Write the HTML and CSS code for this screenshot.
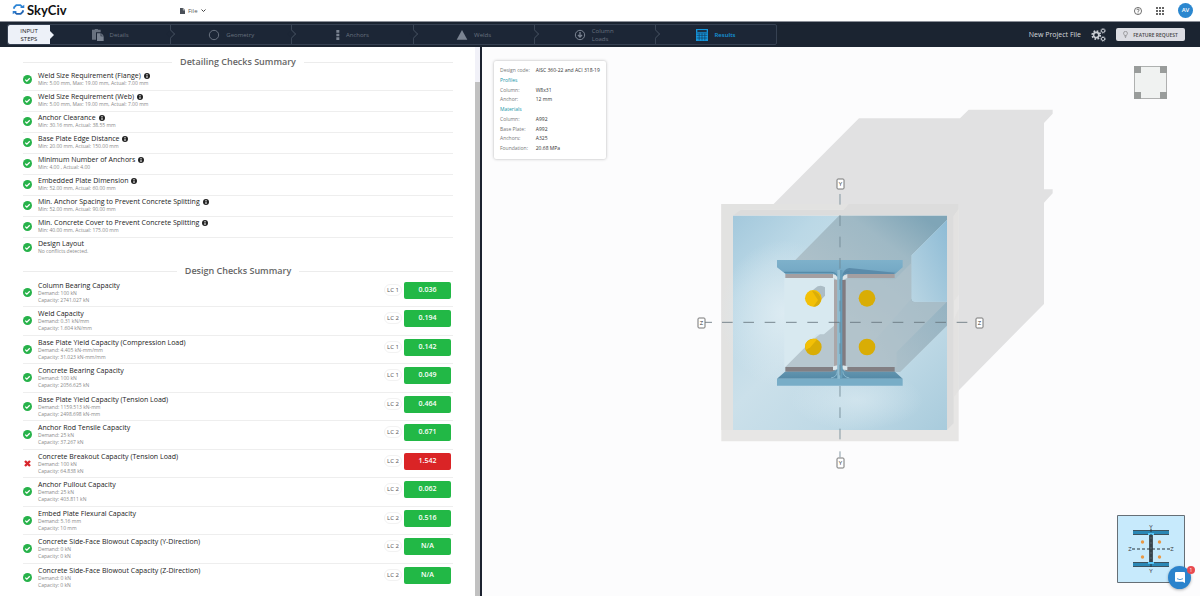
FILE: index.html
```
<!DOCTYPE html>
<html lang="en">
<head>
<meta charset="utf-8">
<title>SkyCiv Base Plate Design</title>
<link rel="stylesheet" href="styles.css">
</head>
<body>
<svg class="sprite" aria-hidden="true">
  <symbol id="ok" viewBox="0 0 18 18"><circle cx="9" cy="9" r="9" fill="#27b24a"/><path d="M4.500 9.200l3.200 3.200 5.800-5.800" fill="none" stroke="#fff" stroke-width="2.600"/></symbol>
  <symbol id="bad" viewBox="0 0 18 18"><path d="M4 4l10 10M14 4L4 14" fill="none" stroke="#d8262c" stroke-width="4.800"/></symbol>
  <symbol id="info" viewBox="0 0 12 12"><circle cx="6" cy="6" r="6" fill="#222"/><path d="M5 2h2v2H5zM5 5h2v5H5z" fill="#fff"/></symbol>
</svg>

<header class="topbar">
  <a class="brand" href="#">
    <svg class="brand-mark" viewBox="0 0 36 36" aria-hidden="true"><g fill="none" stroke-width="5"><path d="M5 16l1-4 6-6h11l6 5" stroke="#2f86d6"/><path d="M31 20l-1 4-6 6H13l-6-5" stroke="#2466b4"/></g><path d="M22 14h12V5zM14 22H2v9z" fill="#2f7fd0"/></svg>
    <span>SkyCiv</span>
  </a>
  <button class="file-menu" type="button">
    <svg class="i-doc" viewBox="0 0 12 14" aria-hidden="true"><path d="M0 0h7v5h5v9H0zM8 0l4 4H8z" fill="#4a5058"/></svg>
    File
    <svg class="i-caret" viewBox="0 0 10 6" aria-hidden="true"><path d="M1 1l4 4 4-4" fill="none" stroke="#444" stroke-width="2"/></svg>
  </button>
  <div class="top-actions">
    <button type="button" aria-label="Help"><svg class="i-top" viewBox="0 0 18 18"><circle cx="9" cy="9" r="8" fill="none" stroke="#444" stroke-width="1.700"/><path d="M6.500 7c0-3.400 5-3.400 5 0 0 1.800-2.500 1.800-2.500 4M9 12.500v2" fill="none" stroke="#444" stroke-width="1.700"/></svg></button>
    <button type="button" aria-label="Apps"><svg class="i-top" viewBox="0 0 16 16" fill="#666"><path d="M0 0h4v4H0zM6 0h4v4H6zM12 0h4v4h-4zM0 6h4v4H0zM6 6h4v4H6zM12 6h4v4h-4zM0 12h4v4H0zM6 12h4v4H6zM12 12h4v4h-4z"/></svg></button>
    <button class="avatar" type="button">AV</button>
  </div>
</header>

<nav class="stepbar" aria-label="Input steps">
  <div class="steps">
    <span class="steps-title">INPUT<br>STEPS</span>
    <a class="step" href="#"><svg class="i-step" viewBox="0 0 36 36"><path d="M0 2h8a5 3 0 0 1 10 0h8v8H12v22H0z" fill="#68717f"/><path d="M15 13h11v9h9v14H15zM28 13l7 7h-7z" fill="#7b8492"/></svg>Details<i></i></a>
    <a class="step" href="#"><svg class="i-step" viewBox="0 0 36 36"><circle cx="18" cy="18" r="14" fill="none" stroke="#68717f" stroke-width="3"/></svg>Geometry<i></i></a>
    <a class="step" href="#"><svg class="i-dots" viewBox="0 0 12 36" fill="#7b8492"><path d="M1 3h9v8H1zM1 14h9v8H1zM1 25h9v8H1z"/></svg>Anchors<i></i></a>
    <a class="step" href="#"><svg class="i-step" viewBox="0 0 36 36"><path d="M18 3l16 29H2z" fill="#7b8492"/></svg>Welds<i></i></a>
    <a class="step narrow" href="#"><svg class="i-step" viewBox="0 0 36 36" fill="none" stroke="#7b8492"><circle cx="18" cy="18" r="14" stroke-width="3"/><path d="M18 9v16M12 18l6 6 6-6" stroke-width="4"/></svg><span>Column Loads</span><i></i></a>
    <a class="step current" href="#" aria-current="step"><svg class="i-step" viewBox="0 0 36 36"><path d="M0 0h36v36H0z" fill="#1596dc"/><path d="M4 3h28v6H4z" fill="#1c3248"/><path d="M9.500 13v21M18 13v21M26.500 13v21M2 12h32M2 19h32M2 27h32" stroke="#123a5c" stroke-width="2"/></svg>Results</a>
  </div>
  <div class="project">
    <span>New Project File</span>
    <button class="gears" type="button" aria-label="Settings"><svg viewBox="0 0 46 42" fill="none" stroke="#c9cdd4"><circle cx="16" cy="21" r="8" stroke-width="5"/><circle cx="16" cy="21" r="12" stroke-width="6" stroke-dasharray="5 4.420"/><circle cx="37" cy="8" r="5" stroke-width="3"/><circle cx="37" cy="8" r="7.500" stroke-width="2" stroke-dasharray="3 3"/><circle cx="37" cy="33" r="5" stroke-width="3"/><circle cx="37" cy="33" r="7.500" stroke-width="2" stroke-dasharray="3 3"/></svg></button>
    <button class="feature" type="button"><svg viewBox="0 0 14 20" fill="none" stroke="#666"><path d="M4.500 13C4 10 1.500 10 1.500 6.500a5.500 5.500 0 0 1 11 0C12.500 10 10 10 9.500 13zM4.500 16h5M5.500 19h3" stroke-width="1.500"/></svg>FEATURE REQUEST</button>
  </div>
</nav>

<main class="workspace">
  <section class="results">
    <h2>Detailing Checks Summary</h2>
    <ul class="detailing">
      <li><svg class="state"><use href="#ok"/></svg><div><h3>Weld Size Requirement (Flange)<svg><use href="#info"/></svg></h3><p>Min: 5.00 mm, Max: 19.00 mm, Actual: 7.00 mm</p></div></li>
      <li><svg class="state"><use href="#ok"/></svg><div><h3>Weld Size Requirement (Web)<svg><use href="#info"/></svg></h3><p>Min: 5.00 mm, Max: 19.00 mm, Actual: 7.00 mm</p></div></li>
      <li><svg class="state"><use href="#ok"/></svg><div><h3>Anchor Clearance<svg><use href="#info"/></svg></h3><p>Min: 30.16 mm, Actual: 38.55 mm</p></div></li>
      <li><svg class="state"><use href="#ok"/></svg><div><h3>Base Plate Edge Distance<svg><use href="#info"/></svg></h3><p>Min: 20.00 mm, Actual: 150.00 mm</p></div></li>
      <li><svg class="state"><use href="#ok"/></svg><div><h3>Minimum Number of Anchors<svg><use href="#info"/></svg></h3><p>Min: 4.00 , Actual: 4.00</p></div></li>
      <li><svg class="state"><use href="#ok"/></svg><div><h3>Embedded Plate Dimension<svg><use href="#info"/></svg></h3><p>Min: 52.00 mm, Actual: 60.00 mm</p></div></li>
      <li><svg class="state"><use href="#ok"/></svg><div><h3>Min. Anchor Spacing to Prevent Concrete Splitting<svg><use href="#info"/></svg></h3><p>Min: 52.00 mm, Actual: 90.00 mm</p></div></li>
      <li><svg class="state"><use href="#ok"/></svg><div><h3>Min. Concrete Cover to Prevent Concrete Splitting<svg><use href="#info"/></svg></h3><p>Min: 40.00 mm, Actual: 175.00 mm</p></div></li>
      <li><svg class="state"><use href="#ok"/></svg><div><h3>Design Layout</h3><p>No conflicts detected.</p></div></li>
    </ul>
    <h2>Design Checks Summary</h2>
    <ul class="design">
      <li><svg class="state"><use href="#ok"/></svg><div><h3>Column Bearing Capacity</h3><p>Demand: 100 kN</p><p>Capacity: 2741.027 kN</p></div><span class="lc">LC 1</span><b class="ratio">0.036</b></li>
      <li><svg class="state"><use href="#ok"/></svg><div><h3>Weld Capacity</h3><p>Demand: 0.31 kN/mm</p><p>Capacity: 1.604 kN/mm</p></div><span class="lc">LC 2</span><b class="ratio">0.194</b></li>
      <li><svg class="state"><use href="#ok"/></svg><div><h3>Base Plate Yield Capacity (Compression Load)</h3><p>Demand: 4.405 kN-mm/mm</p><p>Capacity: 31.023 kN-mm/mm</p></div><span class="lc">LC 1</span><b class="ratio">0.142</b></li>
      <li><svg class="state"><use href="#ok"/></svg><div><h3>Concrete Bearing Capacity</h3><p>Demand: 100 kN</p><p>Capacity: 2056.625 kN</p></div><span class="lc">LC 1</span><b class="ratio">0.049</b></li>
      <li><svg class="state"><use href="#ok"/></svg><div><h3>Base Plate Yield Capacity (Tension Load)</h3><p>Demand: 1159.513 kN-mm</p><p>Capacity: 2498.698 kN-mm</p></div><span class="lc">LC 2</span><b class="ratio">0.464</b></li>
      <li><svg class="state"><use href="#ok"/></svg><div><h3>Anchor Rod Tensile Capacity</h3><p>Demand: 25 kN</p><p>Capacity: 37.267 kN</p></div><span class="lc">LC 2</span><b class="ratio">0.671</b></li>
      <li><svg class="state"><use href="#bad"/></svg><div><h3>Concrete Breakout Capacity (Tension Load)</h3><p>Demand: 100 kN</p><p>Capacity: 64.838 kN</p></div><span class="lc">LC 2</span><b class="ratio fail">1.542</b></li>
      <li><svg class="state"><use href="#ok"/></svg><div><h3>Anchor Pullout Capacity</h3><p>Demand: 25 kN</p><p>Capacity: 403.811 kN</p></div><span class="lc">LC 2</span><b class="ratio">0.062</b></li>
      <li><svg class="state"><use href="#ok"/></svg><div><h3>Embed Plate Flexural Capacity</h3><p>Demand: 5.16 mm</p><p>Capacity: 10 mm</p></div><span class="lc">LC 2</span><b class="ratio">0.516</b></li>
      <li><svg class="state"><use href="#ok"/></svg><div><h3>Concrete Side-Face Blowout Capacity (Y-Direction)</h3><p>Demand: 0 kN</p><p>Capacity: 0 kN</p></div><span class="lc">LC 2</span><b class="ratio">N/A</b></li>
      <li><svg class="state"><use href="#ok"/></svg><div><h3>Concrete Side-Face Blowout Capacity (Z-Direction)</h3><p>Demand: 0 kN</p><p>Capacity: 0 kN</p></div><span class="lc">LC 2</span><b class="ratio">N/A</b></li>
    </ul>
  </section>
  <div class="scroll"><div class="thumb"></div></div>

  <section class="viewer">
    <svg class="scene" viewBox="482 47 718 549" role="img" aria-label="Plan view of column, base plate and anchors">
      <defs>
        <linearGradient id="plate" x1="0" y1="0" x2="1" y2="1"><stop offset="0" stop-color="#a3c8dc"/><stop offset=".2" stop-color="#bbd8e6"/><stop offset=".45" stop-color="#cbe0ea"/><stop offset=".75" stop-color="#bdd8e5"/><stop offset="1" stop-color="#a8cbdc"/></linearGradient>
        <radialGradient id="glow"><stop offset="0" stop-color="#dcebf2"/><stop offset="1" stop-color="#dcebf2" stop-opacity="0"/></radialGradient>
        <linearGradient id="cast" gradientUnits="userSpaceOnUse" x1="700" y1="350" x2="480" y2="650"><stop offset="0" stop-color="#7fa5b7"/><stop offset=".35" stop-color="#9fb9c5"/><stop offset="1" stop-color="#b1c2ca"/></linearGradient>
        <linearGradient id="castlow" gradientUnits="userSpaceOnUse" x1="770" y1="620" x2="480" y2="760"><stop offset="0" stop-color="#8eafc0"/><stop offset="1" stop-color="#b4c5cd"/></linearGradient>
        <linearGradient id="win" x1="0" y1="1" x2="1" y2="0"><stop offset="0" stop-color="#b9d5e3"/><stop offset="1" stop-color="#8dbbd5"/></linearGradient>
        <linearGradient id="steeltop" x1="0" y1="0" x2="0" y2="1"><stop offset="0" stop-color="#7eb1cb"/><stop offset=".5" stop-color="#76aac6"/><stop offset="1" stop-color="#5c90ae"/></linearGradient>
        <linearGradient id="steellow" x1="0" y1="0" x2="0" y2="1"><stop offset="0" stop-color="#6c9cb5"/><stop offset="1" stop-color="#5489a6"/></linearGradient>
      </defs>
      <g transform="translate(690 100) scale(.33333)">
        <path d="M250 313L507 55H810l26-26h252v12l-26 28v199h26v12l-26 28v304L805 872V313z" fill="#e1e1e2"/>
        <path d="M94 312h712v712H94z" fill="#e7e6e5"/>
        <path d="M94 312h382l-16 17H160l-30 17v644H94z" fill="#e2e2e1"/>
        <path d="M476 312h330v16l-15 20v622l-20 20V346H130l22-16h308z" fill="#dcdcdc"/>
        <path d="M791 348l15-20v256l-15 20zM791 660l15-34v246l-15 20z" fill="#e3e2e1"/>
        <path d="M129 347h642v643H129z" fill="url(#plate)"/>
        <ellipse cx="280" cy="640" rx="190" ry="220" fill="url(#glow)"/>
        <ellipse cx="500" cy="900" rx="200" ry="90" fill="url(#glow)" opacity=".6"/>
        <path d="M447 347H771v13L665 466v130q0 9 9 9h97v72L630 816H290L430 680V480H316z" fill="url(#cast)"/>
        <path d="M771 360L665 466v130q0 9 9 9h97z" fill="url(#win)"/>
        <path d="M664 596q2 10 10 10h97v70L630 816H470z" fill="url(#castlow)" opacity=".65"/>
        <path d="M283 534h149v146l-32 24-20-2-85 98h-12z" fill="#d8e9f0"/>
        <path d="M286 801l78-78 26-20h12l30-26v124z" fill="#b7c7cf"/>
        <path d="M468 538h147l48-48v106q2 10 10 10h97L620 756v45H468z" fill="#b2c3cb" opacity=".6"/>
        <path d="M366 572l17-13q12-5 22 3v25l-17 18z" fill="#acbdc6"/>
        <path d="M286 521h149v13H286zM465 521h149v13H465z" fill="#a49fa1"/>
        <path d="M286 801h148v14H286zM466 801h148v14H466z" fill="#827f83"/>
        <path d="M432 540h10v258h-10z" fill="#aaa6a8"/><path d="M456 540h11v258h-11z" fill="#817b80"/>
        <path d="M261 480h377v22l-23 20H475q-18 2-18 18h-14q0-16-18-18H287l-26-20z" fill="url(#steeltop)"/>
        <path d="M261 836l24-21h137q20 0 20-17h15q0 17 18 17h140l23 21z" fill="url(#steellow)"/>
        <path d="M429 522l14 6v12l-14-6zM472 522l-14 6v12l14-6zM429 811l14-3v-12l-14 3zM472 811l-14-3v-12l14 3z" fill="#dce6ea"/>
        <path d="M458 524q3-17 20-20l137 14-4 4H472q-12 0-14 2z" fill="#5b8baa"/>
        <path d="M283 517h140q16 0 19 13M458 530q2-15 20-15" fill="none" stroke="#5087a5" stroke-width="3"/>
        <path d="M423 834q18-3 19-20M478 834q-18-3-20-20" fill="none" stroke="#8ab8ce" stroke-width="3"/>
        <path d="M442 510h8v330h-8z" fill="#8dbbd0"/><path d="M450 510h7v330h-7z" fill="#669eba"/>
        <path d="M261 836h377v21H261z" fill="#78adc7"/>
        <circle cx="370" cy="595" r="25" fill="#f3c006"/><path d="M366 572q25 4 27 30-6 18-23 18l14-20-8-12z" fill="#d9ad0a"/>
        <circle cx="531" cy="595" r="25" fill="#d9ad05"/>
        <circle cx="370" cy="741" r="25" fill="#d9ad05"/><path d="M347 750q-7-28 22-34h14l-22 26z" fill="#f3c006"/>
        <circle cx="531" cy="741" r="25" fill="#d9ad05"/>
        <path d="M450 282v742M450 1054v18" stroke="#6f8591" stroke-width="2.500" stroke-dasharray="32 32" fill="none"/>
        <path d="M36 667h30M96 667H840" stroke="#65747c" stroke-width="2.500" stroke-dasharray="32 32" fill="none"/>
      </g>
      <g fill="#fff" stroke="#777" stroke-width="1"><rect x="837" y="179" width="7" height="10" rx="1"/><rect x="837" y="458" width="7" height="10" rx="1"/><rect x="698" y="318" width="7" height="10" rx="1"/><rect x="976" y="318" width="7" height="10" rx="1"/></g>
      <g class="axis"><text x="840.500" y="186">Y</text><text x="840.500" y="465">Y</text><text x="701.500" y="325">Z</text><text x="979.500" y="325">Z</text></g>
    </svg>
    <dl class="summary">
      <dt>Design code:</dt><dd>AISC 360-22 and ACI 318-19</dd>
      <dt class="group">Profiles</dt>
      <dt>Column:</dt><dd>W8x31</dd>
      <dt>Anchor:</dt><dd>12 mm</dd>
      <dt class="group">Materials</dt>
      <dt>Column:</dt><dd>A992</dd>
      <dt>Base Plate:</dt><dd>A992</dd>
      <dt>Anchors:</dt><dd>A325</dd>
      <dt>Foundation:</dt><dd>20.68 MPa</dd>
    </dl>
    <svg class="cube" viewBox="0 0 99 99" aria-hidden="true"><path d="M1 1h97v97H1z" fill="#f0f2f1" stroke="#909392" stroke-width="2.500"/><path d="M0 0h21v21H0zM78 0h21v21H78zM0 78h21v21H0zM78 78h21v21H78z" fill="#999c9b"/></svg>
    <svg class="minimap" viewBox="0 0 68 68" role="img" aria-label="Section thumbnail">
      <path d="M.5.500h67v67H.5z" fill="#c7eafc" stroke="#666f76"/>
      <path d="M16 15h36v5H16zM16 47h36v5H16z" fill="#3c525e"/><path d="M16 16h36v3H16zM16 48h36v3H16z" fill="#2a87b5"/>
      <path d="M32 20h4v27h-4z" fill="#46545d"/><path d="M31 18h6v2h-6zM31 47h6v2h-6z" fill="#55c4f5"/>
      <path d="M15 34h38M34 14v39" stroke="#26333b" stroke-dasharray="3 2" fill="none"/>
      <g fill="#e99845"><circle cx="25.500" cy="27" r="1.700"/><circle cx="42.500" cy="27" r="1.700"/><circle cx="25.500" cy="42" r="1.700"/><circle cx="42.500" cy="42" r="1.700"/></g>
      <g class="axis"><text x="34" y="14">Y</text><text x="34" y="58">Y</text><text x="13" y="36">Z</text><text x="55" y="36">Z</text></g>
    </svg>
    <button class="chat" type="button" aria-label="Open chat"><svg viewBox="0 0 30 33"><path d="M3 0h24q3 0 3 3v30l-7-4H3q-3 0-3-3V3q0-3 3-3z" fill="#fff"/><path d="M6 20q9 6 18 0" fill="none" stroke="#2b83cc" stroke-width="2.500"/></svg><span>1</span></button>
  </section>
</main>
</body>
</html>
```
FILE: styles.css
```
* { box-sizing: border-box; }
html, body { height: 100%; }
body {
  margin: 0;
  display: flex;
  flex-direction: column;
  overflow: hidden;
  font-family: "Open Sans", "Noto Sans", sans-serif;
  font-size: 6px;
  color: #333;
  background: #fff;
}
button { border: 0; padding: 0; background: none; font: inherit; color: inherit; cursor: pointer; }
a { color: inherit; text-decoration: none; }
h2, h3, p, ul, dl, dd { margin: 0; padding: 0; }
ul { list-style: none; }
svg { display: block; flex: none; }
.sprite { position: absolute; width: 0; height: 0; }

.topbar { display: flex; align-items: center; height: 21px; padding: 0 7px 0 12px; flex: none; }
.brand { display: flex; align-items: center; gap: 2px; width: 168px; font: 700 13px/16px Lato, sans-serif; color: #111; padding-bottom: 2px; }
.brand-mark { width: 13px; height: 13px; }
.file-menu { display: flex; align-items: center; gap: 3px; color: #555; }
.i-doc { width: 5px; height: 6px; }
.i-caret { width: 5px; height: 3px; }
.top-actions { display: flex; align-items: center; gap: 14px; margin-left: auto; }
.i-top { width: 8px; height: 8px; }
.avatar { width: 15px; height: 15px; border-radius: 50%; background: #2b87cf; color: #fff; font-weight: 600; line-height: 15px; }

.stepbar { display: flex; align-items: center; justify-content: space-between; height: 26px; flex: none; padding: 0 15px 0 7px; background: #1b2431; border-top: 1px solid #8b8f98; }
.steps { flex: 1; display: flex; max-width: 770px; height: 21px; border: 1px solid #364152; border-radius: 2px; background: #1c2636; color: #68717f; }
.steps-title { position: relative; width: 42px; background: #edf1f8; color: #222; font-weight: 500; line-height: 8px; text-align: center; padding-top: 2px; border-radius: 2px 0 0 2px; }
.steps-title::after { content: ""; position: absolute; left: 42px; top: 6px; border: 4px solid transparent; border-left-color: #edf1f8; border-right: 0; }
.step { position: relative; flex: 1; display: flex; align-items: center; justify-content: center; gap: 6px; border-right: 1px solid #3b4656; line-height: 8px; }
.step:last-child { border-right: 0; }
.step i { position: absolute; right: -4px; top: 6px; width: 6px; height: 6px; border: solid #3b4656; border-width: 1px 1px 0 0; background: #1c2636; transform: rotate(45deg); z-index: 1; }
.step.narrow span { width: 24px; }
.step.current { color: #1596dc; font-weight: 600; }
.i-step { width: 12px; height: 12px; }
.i-dots { width: 4px; height: 12px; }
.project { display: flex; align-items: center; gap: 10px; color: #d6d9de; font-size: 7px; }
.gears svg { width: 15px; height: 14px; }
.feature { display: flex; align-items: center; justify-content: center; gap: 5px; width: 69px; height: 13px; border-radius: 2px; background: #dcdde3; color: #444; font-size: 5px; font-weight: 600; }
.feature svg { width: 5px; height: 7px; }

.workspace { flex: 1; min-height: 0; display: flex; }
.results { flex: 0 0 calc(40% - 5px); display: flex; flex-direction: column; padding: 9px 22px 5px 23px; min-width: 0; }
.results h2 { display: flex; align-items: center; gap: 8px; height: 12px; font-size: 9px; line-height: 12px; font-weight: 600; color: #666; }
.results h2::before, .results h2::after { content: ""; flex: 1; height: 1px; background: #ececec; }
.results li { display: flex; border-bottom: 1px solid #eee; }
.results li:last-child { border-bottom: 0; }
.results li > div { flex: 1; }
.results h3 { display: flex; align-items: center; gap: 3px; font-size: 7px; line-height: 8px; font-weight: 500; color: #222; }
.results h3 svg { width: 6px; height: 6px; }
.results p { font-size: 5px; line-height: 7px; color: #888; }
.state { width: 9px; height: 9px; margin-right: 6px; }
.detailing { padding-top: 2px; margin-bottom: 6px; }
.detailing li { height: 21px; padding-top: 2px; }
.detailing .state { margin-top: 3px; }
.design { flex: 1; display: flex; flex-direction: column; padding-top: 2px; }
.design li { flex: 1; padding-top: 3px; }
.design .state { margin-top: 6px; }
.lc { width: 18px; height: 12px; margin: 2px 2px 0 0; border: 1px solid #f2f2f2; border-radius: 6px; text-align: center; line-height: 10px; color: #555; }
.ratio { width: 47px; height: 17px; margin-right: 2px; border-radius: 2px; background: #22b846; color: #fff; font-size: 7px; font-weight: 600; line-height: 16px; text-align: center; }
.ratio.fail { background: #da2426; }
.scroll { width: 7px; flex: none; padding-top: 35px; background: #f1f1f8; border-right: 2px solid #1c2230; }
.thumb { height: 100%; background: #c1c1c1; }

.viewer { position: relative; flex: 1; min-width: 0; background: #fcfcfd; }
.scene { width: 100%; height: 100%; }
.axis { font: 6px "Open Sans", sans-serif; fill: #333; text-anchor: middle; }
.summary { position: absolute; left: 12px; top: 14px; display: grid; grid-template-columns: auto auto; grid-auto-rows: 1fr; height: 98px; column-gap: 6px; padding: 5px 6px; background: #fff; border-radius: 2px; box-shadow: 0 0 3px rgba(0, 0, 0, .3); font-size: 5px; line-height: 9px; }
.summary dt { color: #777; }
.summary dd { color: #333; }
.summary .group { grid-column: 1 / -1; color: #2196a8; }
.cube { position: absolute; right: 33px; top: 19px; width: 33px; height: 33px; }
.minimap { position: absolute; right: 15px; bottom: 13px; width: 68px; height: 68px; }
.chat { position: absolute; right: 9px; bottom: 7px; display: grid; place-items: center; width: 23px; height: 23px; border-radius: 50%; background: #2b83cc; box-shadow: 0 1px 3px rgba(0, 0, 0, .3); }
.chat svg { width: 10px; height: 11px; }
.chat span { position: absolute; right: -4px; top: 0; width: 8px; height: 8px; border-radius: 50%; background: #e84a50; color: #fff; font-size: 5px; line-height: 8px; }
```
